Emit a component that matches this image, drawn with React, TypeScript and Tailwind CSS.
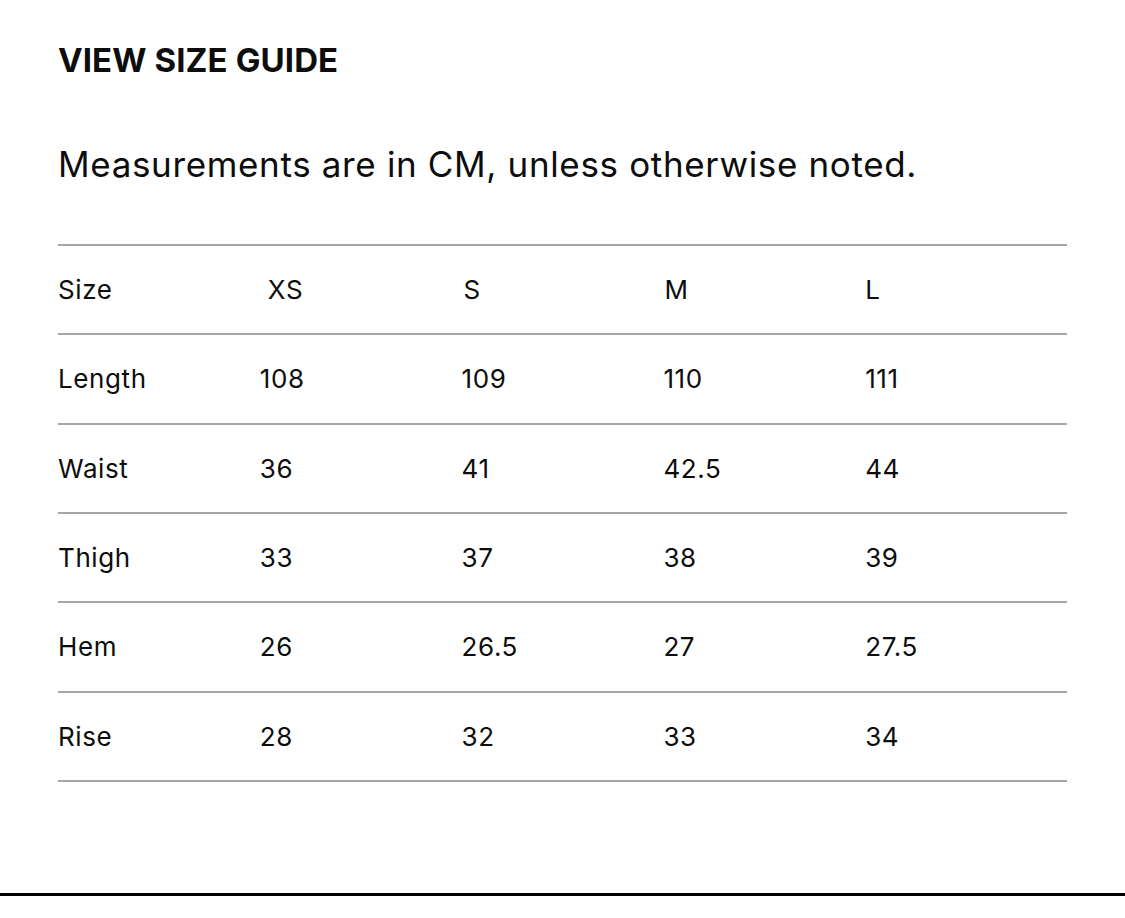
import React from "react";

const rows: string[][] = [
  ["Length", "108", "109", "110", "111"],
  ["Waist", "36", "41", "42.5", "44"],
  ["Thigh", "33", "37", "38", "39"],
  ["Hem", "26", "26.5", "27", "27.5"],
  ["Rise", "28", "32", "33", "34"],
];

export default function App() {
  return (
    <div
      className="w-[1125px] h-[918px] bg-white flex flex-col text-[#0d0d0d]"
      style={{ fontFamily: "Inter, 'Liberation Sans', sans-serif" }}
    >
      <div className="px-[58px] pt-[40px]">
        <h1 className="text-[33px] font-bold leading-[40px] tracking-[0.1px]">VIEW SIZE GUIDE</h1>
        <p className="mt-[62px] text-[35px] leading-[44px] tracking-[0.65px]">
          Measurements are in CM, unless otherwise noted.
        </p>
        <div className="mt-[58px] border-b-2 border-[#a6a6a6]">
          <div className="grid grid-cols-5 h-[89.33px] items-center border-t-2 border-[#a6a6a6] text-[26px] tracking-[0.6px]">
            <span>Size</span>
            <span className="pl-[8px]">XS</span>
            <span className="pl-[2px]">S</span>
            <span className="pl-[1px]">M</span>
            <span>L</span>
          </div>
          {rows.map((r) => (
            <div
              key={r[0]}
              className="grid grid-cols-5 h-[89.33px] items-center border-t-2 border-[#a6a6a6] text-[26px] tracking-[0.6px]"
            >
              {r.map((c, i) => (
                <span key={i}>{c}</span>
              ))}
            </div>
          ))}
        </div>
      </div>
      <div className="mt-auto h-[3px] bg-black" />
      <div className="h-[22px]" />
    </div>
  );
}
